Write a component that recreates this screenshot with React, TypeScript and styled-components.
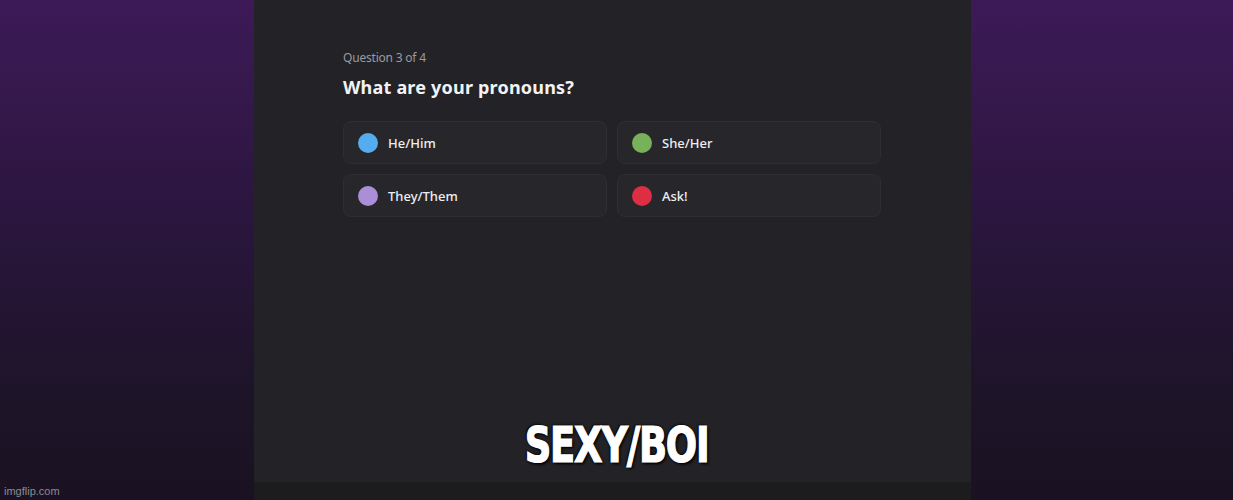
import React from "react";
import styled, { createGlobalStyle } from "styled-components";

const Global = createGlobalStyle`
  html, body { margin: 0; padding: 0; height: 100%; }
  body { background: #1a1222; font-family: "Noto Sans", "Open Sans", sans-serif; overflow: hidden; }
  #root { height: 500px; }
`;

const Page = styled.div`
  position: relative;
  width: 1233px;
  height: 500px;
  display: grid;
  grid-template-columns: 254px 717px 1fr;
  background: linear-gradient(to bottom, #3d1a57 0%, #2c1640 40%, #1d1428 80%, #1a1222 100%);
`;

const Side = styled.div``;

const Panel = styled.div`
  display: flex;
  flex-direction: column;
  background: #1c1c1f;
`;

const Content = styled.div`
  flex: 0 0 482px;
  background: #232327;
  padding: 50px 90px 0 89px;
  box-sizing: border-box;
  display: flex;
  flex-direction: column;
`;

const Step = styled.div`
  color: #9a9aa2;
  font-size: 12px;
  line-height: 16px;
  letter-spacing: -0.2px;
`;

const Title = styled.h1`
  margin: 9px 0 0;
  color: #f2f3f5;
  font-size: 18px;
  font-weight: 700;
  line-height: 24px;
  letter-spacing: 0.2px;
`;

const Grid = styled.div`
  margin-top: 22px;
  display: grid;
  grid-template-columns: 264px 264px;
  column-gap: 10px;
  row-gap: 10px;
`;

const Option = styled.div`
  height: 43px;
  box-sizing: border-box;
  border: 1px solid #2e2e33;
  border-radius: 8px;
  background: #27272b;
  display: flex;
  align-items: center;
  padding-left: 14px;
  gap: 10px;
`;

const Dot = styled.span<{ $c: string }>`
  width: 20px;
  height: 20px;
  border-radius: 50%;
  background: ${(p) => p.$c};
  flex: none;
`;

const Label = styled.span`
  color: #eeeff2;
  font-size: 13px;
  font-weight: 500;
`;

const Caption = styled.div`
  position: absolute;
  left: 0;
  right: 0;
  top: 418px;
  text-align: center;
  color: #fff;
  font-family: "DejaVu Sans Condensed", "Liberation Sans Narrow", "Liberation Sans", sans-serif;
  font-weight: 700;
  font-size: 50px;
  line-height: 54px;
  letter-spacing: -1.5px;
  transform: scaleX(0.82);
  -webkit-text-stroke: 1.2px #fff;
  text-shadow: 0 0 3px #000, 2px 2px 3px #000, -1px -1px 2px #000;
`;

const Watermark = styled.div`
  position: absolute;
  left: 4px;
  bottom: 3px;
  color: #8b8b90;
  font-family: "Liberation Sans", Arial, sans-serif;
  font-size: 11px;
`;

const options = [
  { c: "#55acee", t: "He/Him" },
  { c: "#78b159", t: "She/Her" },
  { c: "#aa8ed6", t: "They/Them" },
  { c: "#dd2e44", t: "Ask!" },
];

export default function App() {
  return (
    <Page>
      <Global />
      <Side />
      <Panel>
        <Content>
          <Step>Question 3 of 4</Step>
          <Title>What are your pronouns?</Title>
          <Grid>
            {options.map((o) => (
              <Option key={o.t}>
                <Dot $c={o.c} />
                <Label>{o.t}</Label>
              </Option>
            ))}
          </Grid>
        </Content>
      </Panel>
      <Side />
      <Caption>SEXY/BOI</Caption>
      <Watermark>imgflip.com</Watermark>
    </Page>
  );
}
